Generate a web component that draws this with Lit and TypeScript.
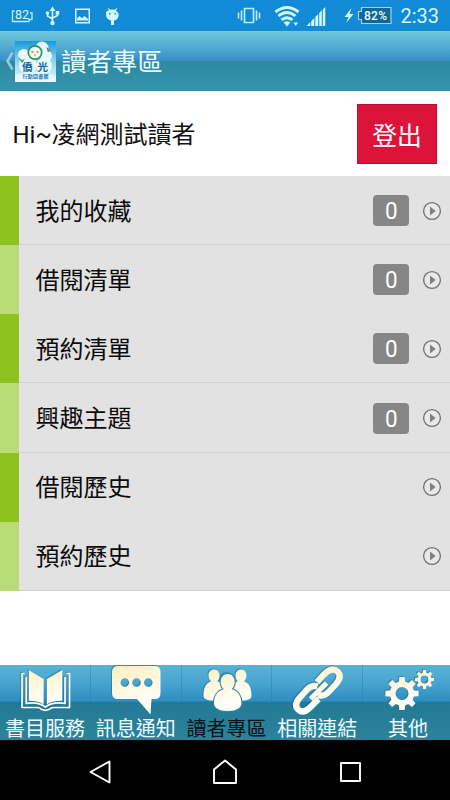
import { LitElement, html, css, svg } from "lit";
import { customElement, property } from "lit/decorators.js";

const gear = (cx: number, cy: number, outer: number, root: number, hole: number) => {
  const pts: string[] = [];
  for (let i = 0; i < 8; i++) {
    const a = (i * Math.PI) / 4;
    const at = (r: number, d: number) =>
      `${(cx + r * Math.sin(a + d)).toFixed(2)} ${(cy - r * Math.cos(a + d)).toFixed(2)}`;
    pts.push(at(root, -0.25), at(outer, -0.16), at(outer, 0.16), at(root, 0.25));
  }
  return `M${pts.join("L")}ZM${cx - hole} ${cy}a${hole} ${hole} 0 1 0 ${hole * 2} 0a${hole} ${hole} 0 1 0 ${-hole * 2} 0Z`;
};

const tabArt = {
  book: svg`
    <path d="M24.500 8.500 H22 V42.500 H38 Q40 42.700 41.500 44.300 Q45.400 46.300 49.300 44.300 Q51 42.700 53 42.500 H69.500 V8.500 H66.500" fill="none" stroke="url(#cream)" stroke-width="1.700" stroke-linejoin="round"/>
    <path d="M26.200 12 V38.300 Q38.500 36.500 45.400 42 Q52 36.500 65 38.300 V12" fill="none" stroke="url(#cream)" stroke-width="1.700"/>
    <path d="M28.800 5 L43.600 14 V39.500 Q38 35.500 28.800 35.800Z M62.200 5 L46.800 14 V39.500 Q52 35.500 62.200 35.800Z" fill="url(#cream)"/>`,
  chat: svg`
    <path fill-rule="evenodd" fill="url(#cream)" d="M27 1 H64 Q69.500 1 69.500 7 V28 Q69.500 34 64 34 H60.500 L59.500 49.500 L46 34 H27 Q21 34 21 28 V7 Q21 1 27 1Z M29.500 17.500a4.300 4.300 0 1 0 8.600 0a4.300 4.300 0 1 0-8.600 0Z M41.200 17.500a4.300 4.300 0 1 0 8.600 0a4.300 4.300 0 1 0-8.600 0Z M53 17.500a4.300 4.300 0 1 0 8.600 0a4.300 4.300 0 1 0-8.600 0Z"/>`,
  people: svg`
    <g fill="url(#cream)">
      <path d="M32 4.500c3.400 0 5.500 2.700 5.500 6c0 2.500-.8 4.300-2.200 5.700c3.500 1 5.700 3 5.700 6.500v13h-10q-9.500-.6-9.500-4.500c0-7.500 1.500-12.500 7.500-15c-1.500-1.500-2.500-3.200-2.500-5.700c0-3.300 2.100-6 5.500-6Z"/>
      <path d="M59 4.500c-3.400 0-5.500 2.700-5.500 6c0 2.500.8 4.300 2.200 5.700c-3.500 1-5.700 3-5.700 6.500v13h10q9.500-.6 9.500-4.500c0-7.500-1.500-12.500-7.500-15c1.500-1.500 2.500-3.200 2.500-5.700c0-3.300-2.100-6-5.500-6Z"/>
      <path stroke="#2d86ae" stroke-width="2.200" paint-order="stroke" d="M45.700 9c4.300 0 7 3.300 7 7.700c0 3.200-1.200 5.600-3.100 7.300c6.900 2 9.800 7.500 9.800 14.500c0 4-4.700 7.500-13.700 7.500s-13.700-3.500-13.700-7.500c0-7 2.900-12.500 9.800-14.500c-1.900-1.700-3.100-4.100-3.100-7.300c0-4.400 2.700-7.700 7-7.700Z"/>
    </g>`,
  link: svg`
    <g fill="none" stroke="url(#cream)" stroke-width="6.200">
      <path d="M45 17 L52 9.500 Q60 1.500 65.500 6.500 Q70.500 11.500 64 19 L56 27.500 Q51 32 46 30"/>
      <path d="M45.500 21.500 Q40 19.500 34.500 25 L27 33.500 Q21.500 40.500 26.500 44.800 Q31.500 49 38 42.500 L46.500 34"/>
      <path d="M38.500 34 L54.500 18" stroke-width="5.200"/>
    </g>`,
  gears: svg`
    <path fill-rule="evenodd" fill="url(#cream)" d="${gear(38.500, 28.500, 16.800, 12.300, 6.500)}"/>
    <path fill-rule="evenodd" fill="url(#cream)" d="${gear(61, 14.500, 9.600, 7, 3.900)}"/>`,
};

@customElement("status-bar")
class StatusBar extends LitElement {
  static styles = css`
    :host { display: flex; justify-content: space-between; height: 31px; background: #138ad6; }
    svg { display: block; }
    .clock { font: 20px/31px Roboto, sans-serif; fill: #d9f8ff; }
    .tiny { font: 12.500px Roboto, sans-serif; fill: #d9f8ff; }
    .pct { font: 500 12px Roboto, sans-serif; fill: #f2ffff; }
  `;
  render() {
    return html`
      <svg width="130" height="31" fill="#d4f8ff">
        <path d="M14.500 11 H12.500 V21.500 H29 V19.500 H32 V13 H30" fill="none" stroke="#b9efff" stroke-width="1.300"/>
        <text class="tiny" x="15" y="19">82</text>
        <path d="M52.500 9V22M47.500 13V16L52.500 19M57.500 12.500V15.500L52.500 18" fill="none" stroke="#d4f8ff" stroke-width="1.600"/>
        <path d="M52.500 6.500L55.500 11H49.500Z"/><circle cx="52.500" cy="23" r="2.200"/><circle cx="47.500" cy="13" r="1.800"/><path d="M55.700 11h3.600v3.600h-3.600z"/>
        <path fill-rule="evenodd" d="M75 8.500H90V23.500H75ZM76.500 10V22H88.500V10Z"/>
        <path d="M77 20.500V18.500L79.500 16L82 18.300L84.500 16L88 19V20.500Z"/>
        <path d="M106 12Q108 10 109 10.500L107.500 7.500L110.500 9.700Q112.500 9.200 114.500 9.700L117.500 7.500L116 10.500Q118.500 12 118.800 15Q118 20 114 20.500V25H111V20.500Q106.500 19.500 106 15Z"/>
        <path d="M109 13h1.500v1.500H109zM114.500 13h1.500v1.500h-1.500z" fill="#138ad6"/>
      </svg>
      <svg width="220" height="31" fill="#d4f8ff">
        <path d="M14.500 8.500H23.500V22.500H14.500ZM11.500 10.500V20.500M26.500 10.500V20.500M8.500 12.500V18.500M29.500 12.500V18.500" fill="none" stroke="#b9efff" stroke-width="1.600"/>
        <path d="M45.500 12Q57 3 68.500 12M48.500 16Q57 9 65.500 16M51.500 19.800Q57 15.500 62.500 19.800" fill="none" stroke="#d4f8ff" stroke-width="2.900"/>
        <path d="M57 26.500L53.500 22.300Q57 20 60.500 22.300ZM63.500 22.500H68L65.700 26Z"/>
        <path d="M76.500 26L80.300 22V26ZM81.200 26V21.200L84.300 18V26ZM85.300 26V17L88.200 14V26ZM89.200 26V13L91.800 10.300V26ZM92.800 26V9.500L95.300 7V26Z"/>
        <path d="M121.500 8L114.500 17H118.500L116 23L123.500 14H119.500Z"/>
        <path d="M131.500 7.500H161V23.500H131.500V19.500H128.500V11.500H131.500Z" fill="#136899" stroke="#95d8ee" stroke-width="1.200"/>
        <text class="pct" x="134" y="20" textLength="23">82%</text>
        <text class="clock" x="170.500" y="23">2:33</text>
      </svg>`;
  }
}

@customElement("title-bar")
class TitleBar extends LitElement {
  static styles = css`
    :host { display: flex; align-items: center; height: 60px; box-sizing: border-box;
      background: linear-gradient(#72c6dc 0, #55afd2 24%, #378fc6 49%, #2e899f 51%, #3396ad 98%, #247f94 100%); }
    .back { width: 15px; height: 60px; flex: none; }
    .logo { width: 41px; height: 41px; flex: none; }
    .big { font: 700 10.500px "Noto Sans CJK TC", sans-serif; fill: #17689f; }
    .sub { font: 700 5px "Noto Sans CJK TC", sans-serif; fill: #2580b9; }
    .title { margin-left: 5px; padding-bottom: 3px; font: 25.400px/40px "Noto Sans CJK TC", sans-serif; color: #e8fbff; }
  `;
  render() {
    return html`
      <svg class="back"><path d="M12.500 21.500L7.500 30L12.500 38.500" fill="none" stroke="#8fcde0" stroke-width="2.600"/></svg>
      <svg class="logo" viewBox="0 0 41 41">
        <defs><linearGradient id="sky" x2="0" y2="1"><stop stop-color="#159bdb"/><stop offset=".5" stop-color="#8fd6f3"/><stop offset="1" stop-color="#e7f8fe"/></linearGradient></defs>
        <rect width="41" height="41" fill="url(#sky)"/>
        <g fill="#e9f8ff"><circle cx="27" cy="7" r="6.500"/><circle cx="9" cy="14" r="6"/><circle cx="31" cy="15" r="6"/><circle cx="13" cy="24" r="9"/><circle cx="29" cy="25" r="8"/><path d="M0 34Q20 27 41 35V41H0Z" fill-opacity=".8"/></g>
        <path d="M3 16l4 3l3-1l-3 4zM31 6l5 3l-3 2z" fill="#43a55c"/><path d="M32 9l4 1l-3 1z" fill="#d65a89"/>
        <circle cx="20" cy="11.500" r="6.700" fill="#f8f5ee" stroke="#21945b" stroke-width="1.700"/>
        <path d="M16.500 11h2M21.500 11h2" fill="none" stroke="#555" stroke-width="1.200"/><path d="M19 14h2" stroke="#c88" stroke-width="1"/>
        <text class="big" x="7" y="30">僑</text><text class="big" x="22.500" y="30">光</text>
        <text class="sub" x="7.500" y="37" textLength="26">行動圖書館</text>
      </svg>
      <span class="title">讀者專區</span>`;
  }
}

@customElement("menu-row")
class MenuRow extends LitElement {
  @property() label = "";
  @property({ type: Number }) count?: number;
  static styles = css`
    :host { display: flex; align-items: center; box-sizing: border-box; background: #e2e2e2; border-left: 19px solid var(--stripe); box-shadow: inset 0 -1px var(--line, #d0d0d0); padding-right: 8px; }
    .label { flex: 1; padding: 0 0 2px 16.500px; font: 24px/36px "Noto Sans CJK TC", sans-serif; color: #0b0b0b; }
    .count { width: 36px; height: 31px; border-radius: 4px; background: #868686; margin-right: 13px; }
    .count text { font: 24px Roboto, sans-serif; fill: #fff; }
    .go { width: 20px; height: 20px; }
  `;
  render() {
    return html`
      <span class="label">${this.label}</span>
      ${this.count === undefined ? "" : html`<svg class="count" viewBox="0 0 36 31"><text x="12" y="24" textLength="12.600" lengthAdjust="spacingAndGlyphs">${this.count}</text></svg>`}
      <svg class="go" viewBox="0 0 20 20"><circle cx="10" cy="10" r="8.400" fill="#e9e9e9" stroke="#707070" stroke-width="1.300"/><path d="M8 5.500L13.700 10L8 14.500Z" fill="#808080"/></svg>`;
  }
}

@customElement("tab-bar")
class TabBar extends LitElement {
  static styles = css`
    :host { display: flex; height: 75px;
      background: linear-gradient(#5bb3d3 0, #4ba5d0 22%, #2e8ec2 48%, #247a94 50%, #2b829a 100%); }
    .tab { flex: none; width: 90.800px; box-sizing: border-box; display: flex; flex-direction: column; align-items: center; border-right: 1px solid #2679a066; }
    .tab:last-child { width: 86.800px; padding-left: 3px; border: 0; }
    .art { width: 90px; height: 50px; flex: none; filter: drop-shadow(-1px -1px .5px #1c5c8077); }
    .tab:last-child .art { width: 83px; }
    .name { font: 20px/25px "Noto Sans CJK TC", sans-serif; color: #eefcff; white-space: nowrap; }
    .active { color: #061418; }
  `;
  render() {
    const tabs: [string, keyof typeof tabArt][] = [
      ["書目服務", "book"], ["訊息通知", "chat"], ["讀者專區", "people"], ["相關連結", "link"], ["其他", "gears"],
    ];
    return html`${tabs.map(([name, art], i) => html`
      <div class="tab">
        <svg class="art" viewBox="${i === 4 ? "3.5 0 83 50" : "0 0 90 50"}">
          <defs><linearGradient id="cream" gradientUnits="userSpaceOnUse" x1="30" y1="0" x2="42" y2="46"><stop stop-color="#fff0bd"/><stop offset=".45" stop-color="#fff8df"/><stop offset="1" stop-color="#ffffff"/></linearGradient></defs>
          ${tabArt[art]}
        </svg>
        <span class="name ${i === 2 ? "active" : ""}">${name}</span>
      </div>`)}`;
  }
}

@customElement("app-root")
class AppRoot extends LitElement {
  static styles = css`
    :host { display: flex; flex-direction: column; width: 450px; height: 800px; background: #fff; overflow: hidden; }
    .greeting { display: flex; align-items: center; justify-content: space-between; height: 85px; box-sizing: border-box; padding: 0 13px 0 12.500px; font: 24px/36px Roboto, "Noto Sans CJK TC", sans-serif; color: #111; }
    .hello { padding-top: 2px; }
    .tilde { letter-spacing: -.3px; }
    .logout { width: 80px; height: 60px; box-sizing: border-box; border: 1px solid #b30f3b; border-radius: 0; padding: 0; background: #dc143c; color: #fff; font: 24.800px/56px "Noto Sans CJK TC", sans-serif; }
    .rows { display: grid; grid-template-rows: repeat(6, 1fr); height: 415px; }
    .odd { --stripe: #8dc21f; }
    .even { --stripe: #badc76; }
    .joined { --line: #dfdfdf; }
    .fill { flex: 1; }
    .nav { display: flex; height: 60px; background: #000; }
    .nav svg { width: 450px; height: 60px; }
  `;
  render() {
    const rows: [string, number?][] = [["我的收藏", 0], ["借閱清單", 0], ["預約清單", 0], ["興趣主題", 0], ["借閱歷史"], ["預約歷史"]];
    return html`
      <status-bar></status-bar>
      <title-bar></title-bar>
      <div class="greeting"><span class="hello">Hi<span class="tilde">~</span>凌網測試讀者</span><button class="logout">登出</button></div>
      <div class="rows">${rows.map(([label, count], i) => html`<menu-row class="${i % 2 ? "even" : "odd"} ${i === 1 || i === 4 ? "joined" : ""}" .label=${label} .count=${count}></menu-row>`)}</div>
      <div class="fill"></div>
      <tab-bar></tab-bar>
      <div class="nav"><svg fill="none" stroke="#fff" stroke-width="1.900" stroke-linejoin="round">
        <path d="M109.500 21.500V42.500L90.500 32Z"/><path d="M214 43V29.500L225 20.500L236 29.500V43Z"/><path d="M341 23H360V41H341Z"/>
      </svg></div>`;
  }
}
